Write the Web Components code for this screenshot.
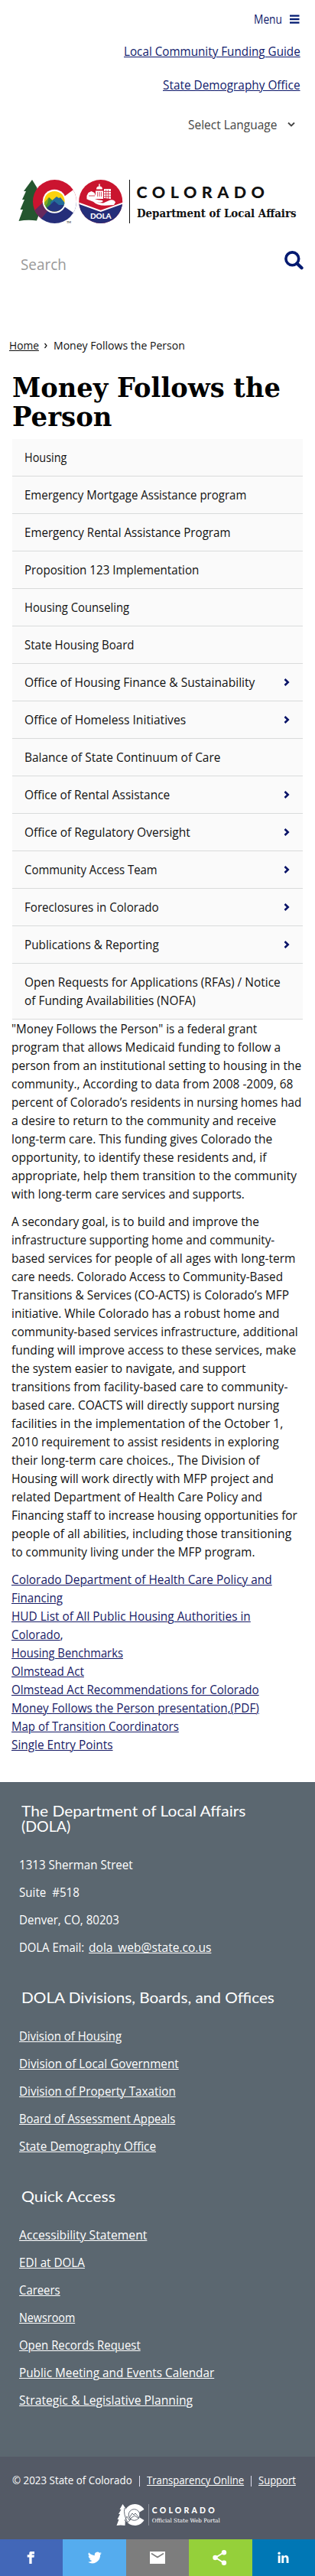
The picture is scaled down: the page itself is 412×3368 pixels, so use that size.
<!DOCTYPE html>
<html lang="en">
<head>
<meta charset="utf-8">
<title>Money Follows the Person | Department of Local Affairs</title>
<style>
html,body{margin:0;padding:0}
body{width:412px;background:#fff;color:#111;font-family:"Open Sans","Noto Sans",sans-serif;font-size:16px;line-height:24px}
</style>
</head>
<body>
<dola-page></dola-page>
<script>
const define = (name, html, ready) => {
  const t = document.createElement('template');
  t.innerHTML = html;
  customElements.define(name, class extends HTMLElement {
    connectedCallback() {
      if (this.shadowRoot) return;
      this.attachShadow({mode: 'open'}).append(t.content.cloneNode(true));
      if (ready) ready(this, this.shadowRoot);
    }
  });
};

/* One line of text, condensed or widened to the width given in "w". */
define('fit-text', `<style>
:host{display:block;white-space:pre;width:var(--w);flex:none}
span{display:inline-block;transform-origin:0 50%;vertical-align:top}
:host([link]) span{text-decoration:underline;text-decoration-thickness:1px;text-underline-offset:1px}
</style><span><slot></slot></span>`, (el, root) => {
  const w = +el.getAttribute('w'), s = root.querySelector('span');
  el.style.setProperty('--w', w + 'px');
  s.style.transform = `scaleX(${w / s.offsetWidth})`;
});

define('top-links', `<style>
:host{display:flex;flex-direction:column;align-items:flex-end;padding:13px 20px 0 0;color:#0f1a6c}
.menu{display:flex;align-items:center;gap:10px;margin-bottom:18px}
.two{margin-top:20px}
.lang{display:flex;align-items:center;gap:14px;margin:28px 6px 0 0;color:#444}
svg{display:block}
</style>
<div class="menu"><fit-text w="37">Menu</fit-text><svg width="13" height="12" viewBox="0 0 13 12" fill="#001970"><path d="M0 .5h12.5v2.2H0zM0 5h12.5v2.2H0zM0 9.5h12.5v2.2H0z"/></svg></div>
<fit-text link w="230.5">Local Community Funding Guide</fit-text>
<fit-text class="two" link w="179.5">State Demography Office</fit-text>
<div class="lang"><fit-text w="116">Select Language</fit-text><svg width="10" height="8" viewBox="0 0 10 8"><path d="M1 1.5l4 4 4-4" fill="none" stroke="#444" stroke-width="1.8"/></svg></div>`);

define('dola-logo', `<style>:host{display:block;padding:57px 0 0 22px}svg{display:block;overflow:visible}</style>
<svg width="370" height="62" viewBox="22 232 370 62">
<defs><clipPath id="c"><circle cx="71.5" cy="263.5" r="28.5"/></clipPath><clipPath id="i"><circle cx="71.2" cy="263.3" r="13.4"/></clipPath><clipPath id="d"><circle cx="131.7" cy="263.5" r="28.5"/></clipPath></defs>
<path fill="#24562f" d="M42 235l6.500 10.500 2 36-2.500 7q-12-1.500-23.500.5l5.500-15h-3.500l5.500-13h-3l5-11h-3z"/>
<g clip-path="url(#c)"><path fill="#cb1430" d="M40 232h60v32H74L44 284z"/><path fill="#252e79" d="M53 285l18-22h29v32H50z"/><path fill="#66295d" d="M42 278l16-15 14 1-18 22z"/><path fill="#fff" d="M84 257l16-12v36l-16-11z"/></g>
<circle cx="71.200" cy="263.300" r="15.500" fill="#fff"/>
<g clip-path="url(#i)"><path fill="#fcd20c" d="M57 249h29v29H57z"/><path fill="#3c8c3c" d="M55 270l9-12 7 6 2 8-17 8z"/><path fill="#86a91d" d="M55 268l9-10-2 8-5 6z"/><path fill="#246d9a" d="M66 264l8-7 3 2 2-1 8 10v6H66z"/><path fill="#243780" d="M56 276l15-13 6 5 9 0v11H56z"/></g>
<text x="87" y="291.500" font-family="Lato,sans-serif" font-size="4" textLength="6">TM</text>
<g clip-path="url(#d)"><path fill="#c9152f" d="M103 234h58v60h-58z"/><path fill="#252e79" d="M103 266l28.700 10.500L161 266v29h-58z"/><path d="M102 265.300l29.700 10.700 29.700-10.700" fill="none" stroke="#fff" stroke-width="2"/></g>
<g fill="#fff"><path d="M113 260.500q8-2.500 15 .8l6 .7q2 2-3 2.700l-5 0 9 .8 9-4q5-1 7 3l-2 3.500-12 .8q-10 0-15-5l-9-3.500z"/><path d="M113.500 256l2-4 4-2 4 2 1.500 4v4h-11.500z"/><path d="M125 249.500h10v10.500h-10zM126 247.500q0-4 4-4t4 4zM129.300 240.500h1.400v4h-1.400z"/><path d="M136 247h9v13l-9-1z"/></g>
<path d="M138.700 248v12M141.700 248v12M136 250.500h9M136 253.700h9M136 256.900h9M127.700 251v6M130.200 251v6M132.700 251v6M116 256h8" stroke="#c9152f" stroke-width=".8"/>
<text x="118" y="286" fill="#fff" font-family="Lato,sans-serif" font-size="10" font-weight="900" textLength="27.500">DOLA</text>
<path d="M169.500 235v57" stroke="#111" stroke-width="1"/>
<text x="178.500" y="259.300" fill="#111" font-family="Lato,sans-serif" font-size="21.500" font-weight="900" textLength="167.500">COLORADO</text>
<text x="179" y="284" fill="#111" font-family="DejaVu Serif Condensed,DejaVu Serif,serif" font-size="14" font-weight="700" textLength="208.500" lengthAdjust="spacingAndGlyphs">Department of Local Affairs</text>
</svg>`);

define('search-bar', `<style>
:host{display:flex;justify-content:space-between;align-items:flex-start;padding:34px 15px 0 27px;height:111px;color:#999;font-size:20px;line-height:24px}
fit-text{margin-top:6px}svg{display:block}
</style><fit-text w="59.500">Search</fit-text>
<svg width="25" height="25" viewBox="0 0 25 25" fill="none" stroke="#001970"><circle cx="10.300" cy="10.300" r="8.400" stroke-width="3.600"/><path d="M16.500 16.500l6 5.800" stroke-width="4.300" stroke-linecap="round"/></svg>`);

define('bread-crumb', `<style>
:host{display:flex;padding:0 0 0 12px;font-size:15px;gap:7.500px}svg{display:block;margin-top:9px}
</style><fit-text link w="38.500">Home</fit-text>
<svg width="4" height="8" viewBox="0 0 4 8"><path d="M.5 1L3 4 .5 7" fill="none" stroke="#111" stroke-width="1.200"/></svg>
<fit-text w="171.500">Money Follows the Person</fit-text>`);

define('page-title', `<style>
:host{display:block;padding:24px 0 0 16px}
h1{margin:0;font:700 36px/38px "DejaVu Serif",serif;color:#000;height:87px}
</style><h1><fit-text w="351">Money Follows the</fit-text><fit-text w="130">Person</fit-text></h1>`);

define('nav-row', `<style>
:host{display:flex;justify-content:space-between;align-items:center;padding:12px 17px 12px 16px;background:#fafafa;border-bottom:1px solid #d9dbdb}
svg{display:none}:host([more]) svg{display:block}
</style><div><slot></slot></div><svg width="8" height="10" viewBox="0 0 8 10"><path d="M1.500 1L5.700 5 1.500 9" fill="none" stroke="#0a1468" stroke-width="2.600"/></svg>`);

define('side-nav', `<style>:host{display:block;margin:0 16px}</style>` + [
 ['Housing',55],['Emergency Mortgage Assistance program',290],['Emergency Rental Assistance Program',269.5],['Proposition 123 Implementation',228],
 ['Housing Counseling',137],['State Housing Board',143.5],['Office of Housing Finance & Sustainability',301,1],['Office of Homeless Initiatives',211,1],
 ['Balance of State Continuum of Care',256],['Office of Rental Assistance',190.5,1],['Office of Regulatory Oversight',216.5,1],['Community Access Team',173.5,1],
 ['Foreclosures in Colorado',176,1],['Publications & Reporting',176,1]
].map(([t,w,m]) => `<nav-row${m?' more':''}><fit-text w="${w}">${t.replace('&','&amp;')}</fit-text></nav-row>`).join('') +
`<nav-row><fit-text w="334.500">Open Requests for Applications (RFAs) / Notice</fit-text><fit-text w="223.500">of Funding Availabilities (NOFA)</fit-text></nav-row>`);

const lines = (a, attr='') => a.map(([t,w]) => `<fit-text ${attr} w="${w}">${t.replace('&','&amp;')}</fit-text>`).join('');

define('article-body', `<style>
:host{display:block;padding:0 0 37px 15px}
p{margin:0 0 12px}.links{color:#171a66}.row{display:flex}
</style><p>` + lines([
 ['"Money Follows the Person" is a federal grant',321.5],['program that allows Medicaid funding to follow a',352],['person from an institutional setting to housing in the',379],
 ['community., According to data from 2008 -2009, 68',368],['percent of Colorado’s residents in nursing homes had',379.5],['a desire to return to the community and receive',346.5],
 ['long-term care. This funding gives Colorado the',341],['opportunity, to identify these residents and, if',333.5],['appropriate, help them transition to the community',373.5],
 ['with long-term care services and supports.',305]]) + '</p><p>' + lines([
 ['A secondary goal, is to build and improve the',324],['infrastructure supporting home and community-',344],['based services for people of all ages with long-term',371.5],
 ['care needs. Colorado Access to Community-Based',355],['Transitions & Services (CO-ACTS) is Colorado’s MFP',363],['initiative. While Colorado has a robust home and',350],
 ['community-based services infrastructure, additional',374.5],['funding will improve access to these services, make',372],['the system easier to navigate, and support',306.5],
 ['transitions from facility-based care to community-',361],['based care. COACTS will directly support nursing',350],['facilities in the implementation of the October 1,',355],
 ['2010 requirement to assist residents in exploring',349.5],['their long-term care choices., The Division of',325],['Housing will work directly with MFP project and',343],
 ['related Department of Health Care Policy and',328],['Financing staff to increase housing opportunities for',374],['people of all abilities, including those transitioning',366],
 ['to community living under the MFP program.',318.5]]) + '</p><div class="links">' + lines([
 ['Colorado Department of Health Care Policy and',340.5],['Financing',67],['HUD List of All Public Housing Authorities in',312.5]],'link') +
 '<div class="row"><fit-text link w="63.500">Colorado</fit-text><fit-text w="4">,</fit-text></div>' + lines([
 ['Housing Benchmarks',145.5],['Olmstead Act',95],['Olmstead Act Recommendations for Colorado',323.5],['Money Follows the Person presentation,(PDF)',323.5],
 ['Map of Transition Coordinators',218.5],['Single Entry Points',132.5]],'link') + '</div>');

define('footer-heading', `<style>
:host{display:block;padding-left:3px;font:400 20px/20px Lato,sans-serif;color:#fff}
</style><slot></slot>`);

define('site-footer', `<style>
:host{display:block;height:882px;box-sizing:border-box;padding:26px 0 0 24.500px;background:#5b6770;color:#fff;border-top:1px solid #53606d}
.list{display:grid;gap:12px;margin:29px 0 43px}.row{display:flex;gap:6px}
</style>
<footer-heading><fit-text w="293">The Department of Local Affairs</fit-text><fit-text w="64.500">(DOLA)</fit-text></footer-heading>
<div class="list"><fit-text w="148.500">1313 Sherman Street</fit-text><fit-text w="78.500">Suite  #518</fit-text><fit-text w="131">Denver, CO, 80203</fit-text>
<div class="row"><fit-text w="85.500">DOLA Email:</fit-text><fit-text link w="160.500">dola_web@state.co.us</fit-text></div></div>
<footer-heading><fit-text w="331">DOLA Divisions, Boards, and Offices</fit-text></footer-heading>
<div class="list">` + lines([['Division of Housing',134.5],['Division of Local Government',209],['Division of Property Taxation',204.5],['Board of Assessment Appeals',204.5],['State Demography Office',179]],'link') +
`</div><footer-heading><fit-text w="123">Quick Access</fit-text></footer-heading><div class="list">` +
lines([['Accessibility Statement',167.5],['EDI at DOLA',85.5],['Careers',54],['Newsroom',73.5],['Open Records Request',158.5],['Public Meeting and Events Calendar',255.5],['Strategic & Legislative Planning',227]],'link') + '</div>');

define('legal-bar', `<style>
:host{display:flex;flex-direction:column;height:108px;box-sizing:border-box;padding:19px 0 0 16px;background:#545a66;color:#fff;font-size:14.500px}
.row{display:flex;gap:9px}svg{display:block;margin:17px 0 0 136px;overflow:visible}i{width:1px;height:14px;margin-top:6px;background:#dde;flex:none}
</style><div class="row"><fit-text w="156.500">© 2023 State of Colorado</fit-text><i></i><fit-text link w="127">Transparency Online</fit-text><i></i><fit-text link w="48.500">Support</fit-text></div>
<svg width="138" height="32" viewBox="152 272 138 32" fill="#fff">
<path d="M160.500 274l4 6-1 22q-6-1-11 0l3-8h-2l3.500-7h-2l3.500-6h-2z"/>
<path d="M188.500 281a14 14 0 1 0 0 14l-6-3.500v-7z"/><path d="M163 296l3-6 3 5 5-7" fill="none" stroke="#545a66" stroke-width=".8"/><circle cx="175.500" cy="288" r="7.300" stroke="#545a66" stroke-width=".9"/><path d="M169 292l4-6 2 2 2-2 5 6M170 293l6-4 6 4M163 279q-2 8 4 19l5-5" fill="none" stroke="#545a66" stroke-width=".9"/>
<path d="M194.500 274v28" stroke="#8b909a" stroke-width="1"/>
<text x="198.800" y="286" font-family="Lato,sans-serif" font-size="10.500" font-weight="900" textLength="82">COLORADO</text>
<text x="198.800" y="297.500" font-family="DejaVu Serif Condensed,DejaVu Serif,serif" font-size="7.200" textLength="89" lengthAdjust="spacingAndGlyphs">Official State Web Portal</text></svg>`);

define('share-bar', `<style>
:host{display:grid;grid-template-columns:repeat(5,1fr);height:48px}
div{display:grid;place-items:center}svg{display:block}
</style>
<div style="background:#4267b8"><svg width="24" height="24"><path fill="#fff" d="M9.300 20v-8.500H6.700V8.200h2.600V6.600C9.300 3.400 10.900 4 14 4h2v3.300h-2c-1.300 0-1.400.3-1.400 1.300h3.300l-.4 3.200h-2.900V20z"/></svg></div>
<div style="background:#55acee"><svg width="24" height="24" viewBox="0 0 24 24"><path fill="#fff" d="M21 6.300c-.7.300-1.400.5-2.100.6.800-.5 1.300-1.200 1.600-2-.7.400-1.500.7-2.300.9A3.700 3.700 0 0 0 11.900 9.200 10.500 10.500 0 0 1 4.200 5.300a3.700 3.700 0 0 0 1.200 5c-.6 0-1.200-.2-1.700-.5 0 1.900 1.300 3.300 3 3.700-.5.100-1.100.2-1.700.1.500 1.500 1.800 2.500 3.500 2.500A7.500 7.500 0 0 1 3 17.700 10.500 10.500 0 0 0 19.100 8.300c.8-.6 1.400-1.200 1.900-2z"/></svg></div>
<div style="background:#7d7d7d"><svg width="24" height="24"><path fill="#fff" d="M2 4h20v16H2z"/><path d="M4 6.500l8 5 8-5" fill="none" stroke="#7d7d7d" stroke-width="1.500"/></svg></div>
<div style="background:#95d03a"><svg width="24" height="24" fill="#fff"><path d="M17 5L6 12l11 7" fill="none" stroke="#fff" stroke-width="2"/><circle cx="17" cy="5.200" r="3.200"/><circle cx="5.500" cy="12" r="3.200"/><circle cx="17" cy="18.800" r="3.200"/></svg></div>
<div style="background:#0077b5"><svg width="24" height="24" fill="#fff"><path d="M4.700 9.300h2.900V19H4.700zM9.300 9.300h2.800v1.400c1.500-2.600 6.400-2.300 6.400 2.200V19h-2.900v-5.500c0-2.600-3.400-2.500-3.400 0V19H9.300z"/><circle cx="6.100" cy="6.300" r="1.700"/></svg></div>`);

define('dola-page', `<style>:host{display:block;width:412px;height:3368px;overflow:hidden}</style>
<header><top-links></top-links><dola-logo></dola-logo><search-bar></search-bar></header>
<main><bread-crumb></bread-crumb><page-title></page-title><side-nav></side-nav><article-body></article-body></main>
<footer><site-footer></site-footer><legal-bar></legal-bar><share-bar></share-bar></footer>`);
</script>
</body>
</html>
